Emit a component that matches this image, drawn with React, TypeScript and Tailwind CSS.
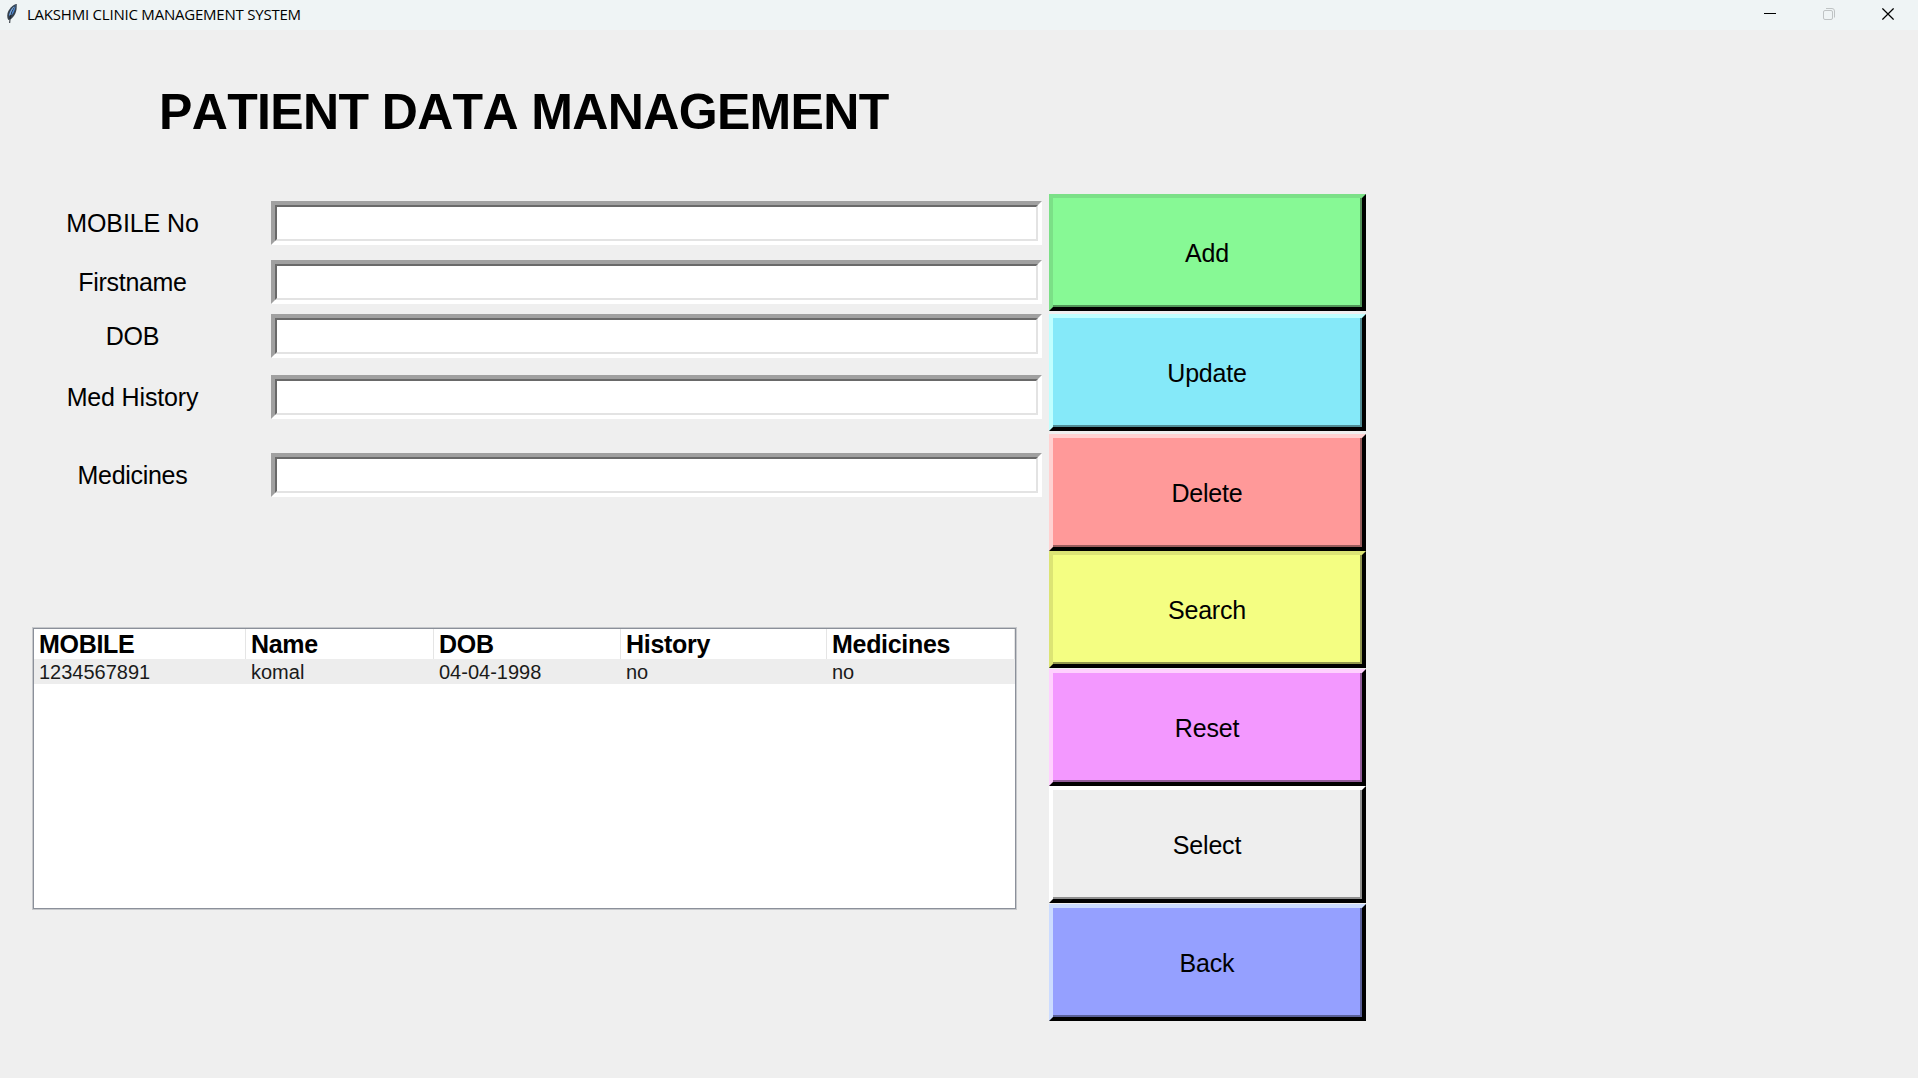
const fields = [
  { label: "MOBILE No", gap: "mt-0", track: "tracking-[-0.1px]" },
  { label: "Firstname", gap: "mt-[15px]", track: "tracking-[-0.3px]" },
  { label: "DOB", gap: "mt-[10px]", track: "tracking-[-0.2px]" },
  { label: "Med History", gap: "mt-[17px]", track: "tracking-[-0.15px]" },
  { label: "Medicines", gap: "mt-[34px]", track: "tracking-[-0.3px]" },
];

const buttons = [
  { label: "Add", gap: "mt-0", outer: "border-l-[#7be087] border-t-[#7be087]", inner: "bg-[#87f995] border-r-[#519559] border-b-[#519559]" },
  { label: "Update", gap: "mt-[3px]", outer: "border-l-[#c0ffff] border-t-[#c0ffff]", inner: "bg-[#85e9f9] border-r-[#508c95] border-b-[#508c95]" },
  { label: "Delete", gap: "mt-[3px]", outer: "border-l-[#ffd2d2] border-t-[#ffd2d2]", inner: "bg-[#ff9999] border-r-[#995c5c] border-b-[#995c5c]" },
  { label: "Search", gap: "mt-0", outer: "border-l-[#dce474] border-t-[#dce474]", inner: "bg-[#f4fe82] border-r-[#92984e] border-b-[#92984e]" },
  { label: "Reset", gap: "mt-px", outer: "border-l-[#ffd1ff] border-t-[#ffd1ff]", inner: "bg-[#f398ff] border-r-[#925b99] border-b-[#925b99]" },
  { label: "Select", gap: "mt-0", outer: "border-l-white border-t-white", inner: "bg-[#eeeeee] border-r-[#8f8f8f] border-b-[#8f8f8f]" },
  { label: "Back", gap: "mt-[1px]", outer: "border-l-[#ccdcff] border-t-[#ccdcff]", inner: "bg-[#95a0ff] border-r-[#596099] border-b-[#596099]" },
];

const columns = ["MOBILE", "Name", "DOB", "History", "Medicines"];
const patients = [["1234567891", "komal", "04-04-1998", "no", "no"]];

function Feather() {
  return (
    <svg className="ml-[6px] mt-[3px] h-[21px] w-[12px] shrink-0" viewBox="0 0 12 21">
      <path d="M10.8 1C7 1.5 2.5 6 1.5 10.5C1 13 1.2 15.5 2.4 17L4 16.5C8 14.5 10 10 10.6 6Z" fill="#35404c" />
      <path d="M9.6 2.3C6.5 4 3.4 8 3 13L6.3 11.5C8.8 8 9.5 5 9.6 2.3Z" fill="#4b86cf" />
      <path d="M9.2 3C6 7 4.2 11 3.7 20" fill="none" stroke="#20262e" strokeWidth="1" />
      <path d="M8.4 3.8C5.8 6.4 4.4 9 3.9 12" fill="none" stroke="#9dc3ee" strokeWidth=".8" />
    </svg>
  );
}

function TitleBar() {
  return (
    <header className="flex h-[30px] items-start bg-[#eff4f5]">
      <Feather />
      <h1 className="ml-[9px] mt-[3px] flex-1 whitespace-nowrap font-['Open_Sans',sans-serif] text-[15px] leading-[22px] tracking-[-0.22px]">
        LAKSHMI CLINIC MANAGEMENT SYSTEM
      </h1>
      <div className="mr-[24px] mt-[7px] flex gap-[47px]">
        <svg className="h-[14px] w-[12px]" viewBox="0 0 12 14"><path d="M0 6.500h12" stroke="#000" strokeWidth="1" /></svg>
        <svg className="h-[14px] w-[12px]" viewBox="0 0 12 14" fill="none" stroke="#bfc3c4">
          <rect x=".5" y="3.500" width="9" height="9" rx="1.500" />
          <path d="M3 1.500h6a2.500 2.500 0 0 1 2.500 2.500V10.500" />
        </svg>
        <svg className="h-[14px] w-[12px]" viewBox="0 0 12 14"><path d="M.4 1.400l11.200 11.200M11.600 1.400L.4 12.600" stroke="#000" strokeWidth="1.300" /></svg>
      </div>
    </header>
  );
}

export default function App() {
  return (
    <div className="flex h-[1078px] w-[1918px] flex-col overflow-hidden bg-[#efefef] font-['Liberation_Sans',Arial,sans-serif] text-black">
      <TitleBar />
      <main className="flex">
        <section className="w-[1049px] shrink-0">
          <h2 className="ml-[159px] mt-[53px] whitespace-nowrap text-[50px] font-bold leading-[58px] tracking-[-0.64px] [font-kerning:none]">
            PATIENT DATA MANAGEMENT
          </h2>
          <form className="mt-[60px]">
            {fields.map((f) => (
              <label key={f.label} className={`flex h-[44px] items-center ${f.gap}`}>
                <span className={`mr-[6px] w-[265px] text-center text-[25px] leading-[28px] [font-kerning:none] ${f.track}`}>{f.label}</span>
                <span className="h-[44px] w-[771px] border-4 border-b-white border-l-[#a0a0a0] border-r-white border-t-[#a0a0a0]">
                  <input className="block h-full w-full border-2 border-b-[#e3e3e3] border-l-[#696969] border-r-[#e3e3e3] border-t-[#696969] bg-white outline-none" />
                </span>
              </label>
            ))}
          </form>
          <div className="ml-8 mt-[130px] h-[283px] w-[985px] border border-[#c6c8cb] bg-white">
            <div className="h-full border border-[#8b909a]">
              <div className="grid h-[30px] grid-cols-[212px_188px_187px_206px_1fr] text-[25px] font-bold leading-[30px] tracking-[-0.3px] [font-kerning:none]">
                {columns.map((c) => (
                  <span key={c} className="border-r border-[#e5e5e5] pl-[5px]">{c}</span>
                ))}
              </div>
              {patients.map((row) => (
                <div key={row[0]} className="grid h-[25px] grid-cols-[212px_188px_187px_206px_1fr] bg-[#ededed] text-[20px] leading-[26px] text-[#1a1a1a] [font-kerning:none]">
                  {row.map((v, i) => (
                    <span key={i} className="pl-[5px]">{v}</span>
                  ))}
                </div>
              ))}
            </div>
          </div>
        </section>
        <nav className="flex w-[317px] flex-col pt-[164px]">
          {buttons.map((b) => (
            <button key={b.label} className={`h-[117px] w-full border-4 border-b-black border-r-black text-[25px] leading-[28px] tracking-[-0.2px] [font-kerning:none] ${b.gap} ${b.outer}`}>
              <span className={`flex h-full w-full items-center justify-center border-b-2 border-r-2 pl-px pt-[2px] ${b.inner}`}>{b.label}</span>
            </button>
          ))}
        </nav>
      </main>
    </div>
  );
}
